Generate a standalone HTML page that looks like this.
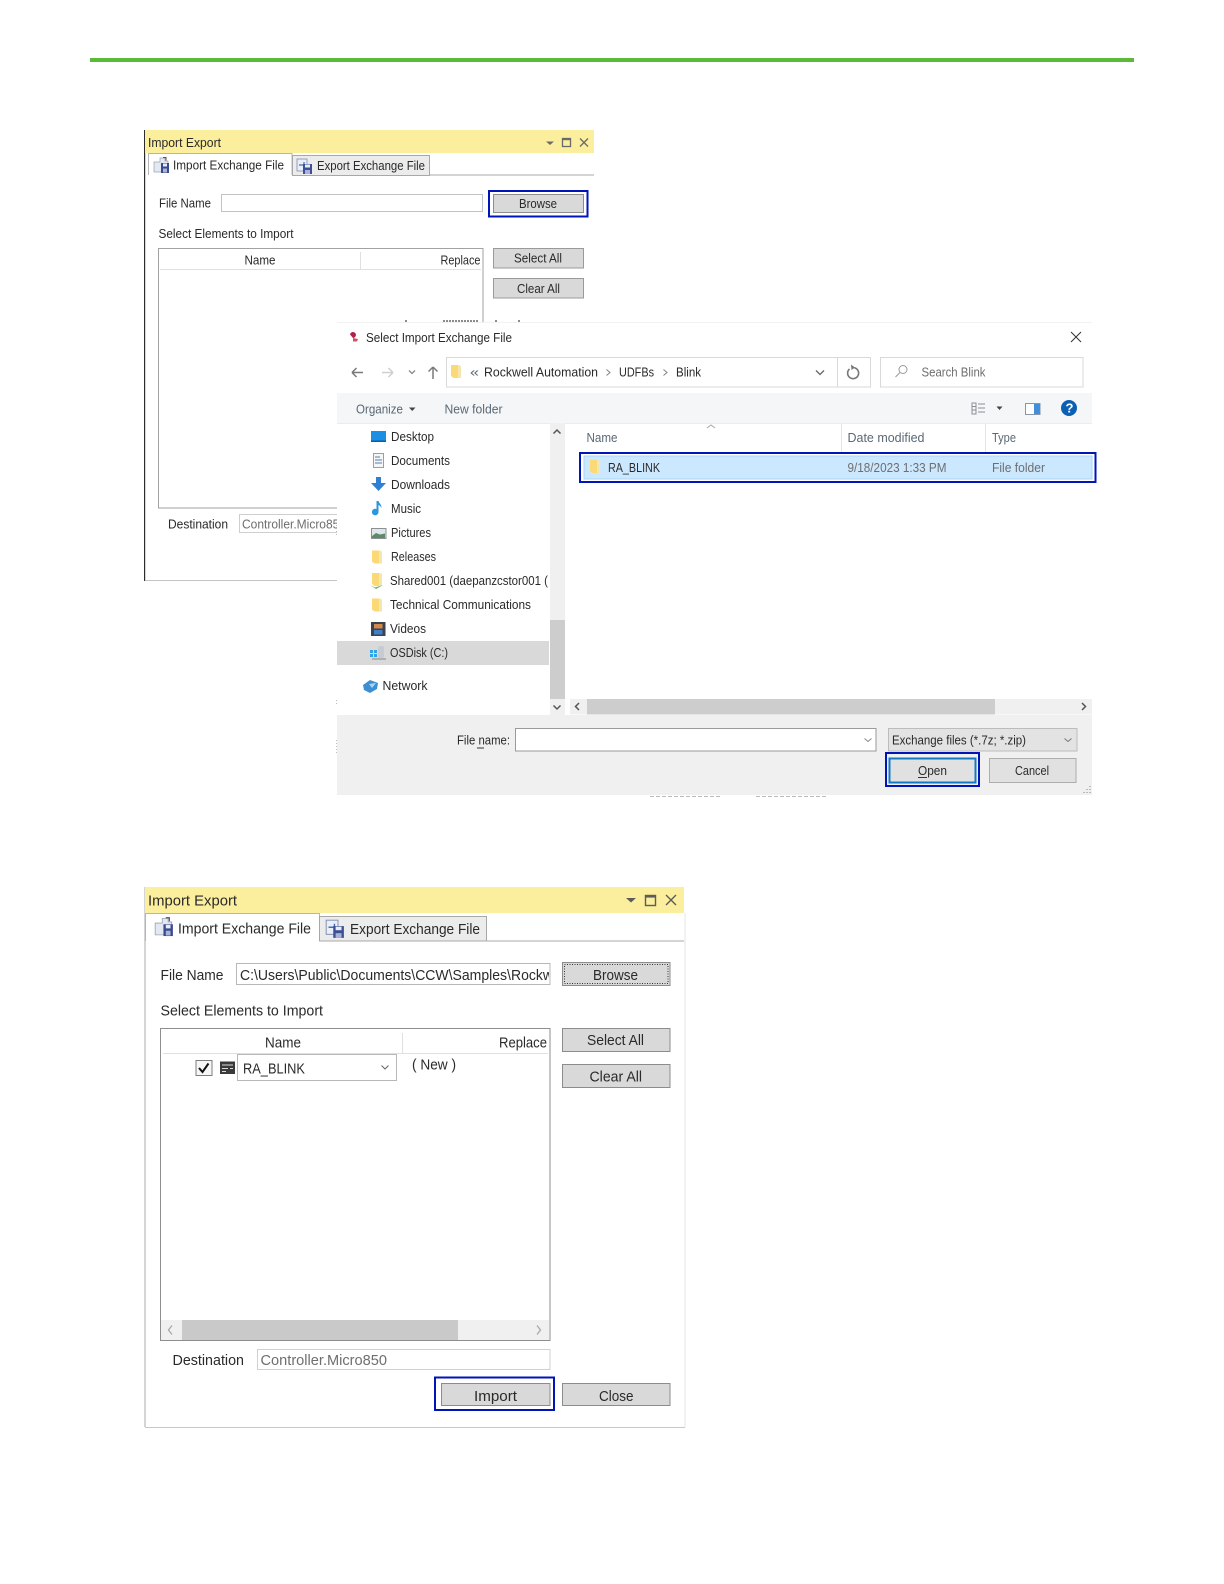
<!DOCTYPE html>
<html><head><meta charset="utf-8"><title>Import Export</title>
<style>
html,body{margin:0;padding:0;background:#fff}
svg{display:block}
text{font-family:"Liberation Sans",sans-serif;fill:#2a2a2a}
.a{font-size:12.5px}
.b{font-size:15px}
.g{fill:#6e6e6e}
.h{fill:#5a6876}
</style></head><body>
<svg xmlns="http://www.w3.org/2000/svg" width="1224" height="1584" viewBox="0 0 1224 1584">
<defs>
<clipPath id="c1"><rect x="238" y="962" width="311" height="24"/></clipPath>
<clipPath id="c2"><rect x="380" y="570" width="169" height="22"/></clipPath>
<clipPath id="c3"><rect x="240" y="514" width="97" height="20"/></clipPath>
<g id="fold"><path d="M0 1h7l3 1v12H2.500L0 12z" fill="#fbd976"/><path d="M7 1l3 1v12H7z" fill="#f5e6ae"/></g>
<g id="imp"><path d="M1 15V6h6V2h5v3h3v11H1z" fill="#e4e8f0" stroke="#9aa2b4" stroke-width=".7"/><rect x="8" y="7" width="8" height="10" fill="#3a4a8e"/><rect x="10" y="7.500" width="4" height="3" fill="#e8ecf5"/><rect x="10" y="12.500" width="4" height="4" fill="#aab4d6"/><path d="M10 1.500l3 0v3" fill="none" stroke="#555" stroke-width="1"/></g>
<g id="exp"><rect x="1" y="1" width="10" height="12" fill="#e9eef8" stroke="#7f8cab" stroke-width=".8"/><path d="M3 7h5V4" fill="none" stroke="#3e6fb5" stroke-width="1.200"/><rect x="7" y="6" width="9" height="10" fill="#3d4f98"/><rect x="9" y="6.500" width="5" height="3" fill="#e8ecf5"/><rect x="9" y="12" width="5" height="4" fill="#a9b3d6"/></g>
</defs>
<rect width="1224" height="1584" fill="#fff"/>
<rect x="90" y="58" width="1044" height="4" fill="#5bbb38"/>

<!-- Dialog 1 -->
<rect x="144" y="130" width="1.200" height="451" fill="#2d2d2d"/>
<rect x="145" y="580" width="192" height="1" fill="#c4c4c4"/>
<rect x="145" y="130" width="449" height="23" fill="#fbee9c"/>
<text class="a" x="148" y="146.800" textLength="73" lengthAdjust="spacingAndGlyphs">Import Export</text>
<path d="M546 141.500h8l-4 3.500z" fill="#6a6a6a"/>
<rect x="562.500" y="138.500" width="8" height="8" fill="none" stroke="#6a6a6a" stroke-width="1.300"/><rect x="562" y="138" width="9" height="2.200" fill="#6a6a6a"/>
<path d="M580 138.500l8 8M588 138.500l-8 8" stroke="#6a6a6a" stroke-width="1.300"/>
<path d="M429 175H594" stroke="#a8a8a8"/>
<path d="M148.500 175V153.500H292V175" fill="#fff" stroke="#b5b5b5"/>
<rect x="292.500" y="155.500" width="137" height="20" fill="#ececec" stroke="#a8a8a8"/>
<use href="#imp" x="153" y="156"/>
<use href="#exp" x="296" y="158"/>
<text class="a" x="173" y="169.500" textLength="111" lengthAdjust="spacingAndGlyphs">Import Exchange File</text>
<text class="a" x="317" y="170" textLength="108" lengthAdjust="spacingAndGlyphs">Export Exchange File</text>
<text class="a" x="159" y="207.500" textLength="52" lengthAdjust="spacingAndGlyphs">File Name</text>
<rect x="221.500" y="194.500" width="261" height="17" fill="#fff" stroke="#c2c2c2"/>
<rect x="493.500" y="194.500" width="90" height="18" fill="#d9d9d9" stroke="#8c8c8c"/>
<text class="a" x="519" y="208" textLength="38" lengthAdjust="spacingAndGlyphs">Browse</text>
<rect x="489" y="191" width="98.500" height="25.500" fill="none" stroke="#0015b8" stroke-width="2"/>
<text class="a" x="158.500" y="237.800" textLength="135" lengthAdjust="spacingAndGlyphs">Select Elements to Import</text>
<rect x="158.500" y="248.500" width="324.500" height="259.500" fill="#fff" stroke="#a2a2a2"/>
<path d="M160 269.500H481" stroke="#e0e0e0"/><path d="M360.500 252V269" stroke="#e0e0e0"/>
<text class="a" x="244.500" y="264.500" textLength="31" lengthAdjust="spacingAndGlyphs">Name</text>
<text class="a" x="440.500" y="264.500" textLength="40" lengthAdjust="spacingAndGlyphs">Replace</text>
<rect x="493.500" y="248.500" width="90" height="19.500" fill="#d9d9d9" stroke="#9a9a9a"/>
<text class="a" x="514" y="262.500" textLength="48" lengthAdjust="spacingAndGlyphs">Select All</text>
<rect x="493.500" y="278.500" width="90" height="19.500" fill="#d9d9d9" stroke="#9a9a9a"/>
<text class="a" x="517" y="293" textLength="43" lengthAdjust="spacingAndGlyphs">Clear All</text>
<text class="a" x="168" y="528.500" textLength="60" lengthAdjust="spacingAndGlyphs">Destination</text>
<rect x="239.500" y="514.500" width="110" height="18" fill="#fff" stroke="#cfcfcf"/>
<text class="a g" x="242" y="528.500" textLength="104" lengthAdjust="spacingAndGlyphs" clip-path="url(#c3)">Controller.Micro850</text>
<path d="M405 321h3M443 321h35M495 321h3M518 321h3" stroke="#666" stroke-width="1.500" stroke-dasharray="2 1"/>

<!-- Dialog 2 -->
<rect x="337" y="322" width="755" height="473" fill="#fff"/>
<rect x="337" y="322" width="755" height="1" fill="#f2f2f2"/>
<path d="M350 334.500a3 3 0 1 1 3 3.500" fill="#b3204a"/><path d="M353 338l5 1-1 2.500h-4z" fill="#c9555f"/>
<text class="a" x="366" y="341.800" textLength="146" lengthAdjust="spacingAndGlyphs">Select Import Exchange File</text>
<path d="M1071 332l10 10M1081 332l-10 10" stroke="#333" stroke-width="1"/>
<path d="M352 372.500h11M352 372.500l4.500-4.500M352 372.500l4.500 4.500" fill="none" stroke="#7a7a7a" stroke-width="1.500"/>
<path d="M382 372.500h11M393 372.500l-4.500-4.500M393 372.500l-4.500 4.500" fill="none" stroke="#cfcfcf" stroke-width="1.500"/>
<path d="M409 370.500l3 3 3-3" fill="none" stroke="#888" stroke-width="1.300"/>
<path d="M433 379v-12M433 367l-4.500 4.500M433 367l4.500 4.500" fill="none" stroke="#7a7a7a" stroke-width="1.500"/>
<rect x="446.500" y="357.500" width="424" height="29.500" fill="#fff" stroke="#d9d9d9"/>
<path d="M837.500 358V387" stroke="#d9d9d9"/>
<use href="#fold" x="451" y="364"/>
<text class="a h" x="470" y="376.500" textLength="9" lengthAdjust="spacingAndGlyphs">«</text>
<text class="a" x="484" y="376.500" textLength="114" lengthAdjust="spacingAndGlyphs">Rockwell Automation</text>
<path d="M606.500 369.500l3.500 3-3.500 3" fill="none" stroke="#888" stroke-width="1.100"/>
<text class="a" x="619" y="376.500" textLength="35" lengthAdjust="spacingAndGlyphs">UDFBs</text>
<path d="M663.500 369.500l3.500 3-3.500 3" fill="none" stroke="#888" stroke-width="1.100"/>
<text class="a" x="676" y="376.500" textLength="25" lengthAdjust="spacingAndGlyphs">Blink</text>
<path d="M816 370.500l4 4 4-4" fill="none" stroke="#666" stroke-width="1.300"/>
<path d="M849.500 369a5.500 5.500 0 1 0 5-1.200" fill="none" stroke="#777" stroke-width="1.600"/><path d="M851 364.500l4 3-3.500 2.500z" fill="#777"/>
<rect x="880.500" y="357.500" width="202.500" height="29.500" fill="#fff" stroke="#d9d9d9"/>
<circle cx="903" cy="369.500" r="4" fill="none" stroke="#9a9a9a"/><path d="M900 372.500l-4.500 4.500" stroke="#9a9a9a"/>
<text class="a g" x="921.500" y="376.500" textLength="64" lengthAdjust="spacingAndGlyphs">Search Blink</text>
<rect x="337" y="393" width="755" height="30" fill="#f5f6f7"/>
<rect x="337" y="423" width="755" height="1" fill="#ececec"/>
<text class="a h" x="356" y="413.500" textLength="47" lengthAdjust="spacingAndGlyphs">Organize</text>
<path d="M409 407.500h6.500l-3.250 3.500z" fill="#444"/>
<text class="a h" x="444.500" y="413.500" textLength="58" lengthAdjust="spacingAndGlyphs">New folder</text>
<path d="M972 403h4v11h-4zM972 406.500h4M972 410h4M978 404h7M978 408h7M978 412h7" fill="none" stroke="#8a8f96"/>
<path d="M996.500 406.500h6l-3 3.500z" fill="#444"/>
<rect x="1025.500" y="403.500" width="14.500" height="11" fill="#fff" stroke="#8a95a5"/><rect x="1034" y="404" width="6" height="10" fill="#3f8fdc"/>
<circle cx="1069" cy="408" r="8" fill="#0b60b3"/>
<text x="1065.500" y="412.500" font-size="13" font-weight="bold" style="fill:#fff">?</text>

<!-- nav pane -->
<rect x="337" y="641" width="212" height="24" fill="#d9d9d9"/>
<rect x="371" y="431" width="15" height="11" fill="#1a8fe3"/><rect x="371" y="440.500" width="15" height="1.500" fill="#0a5ea8"/>
<rect x="373.500" y="453.500" width="10" height="14" fill="#f4f6f8" stroke="#9a9fa6"/><path d="M375 457h5M375 460h7M375 463h7" stroke="#5c7fa8"/>
<path d="M376 477h5v6h5l-7.500 8-7.500-8h5z" fill="#2f7fd6"/>
<path d="M378.500 501v11a3.300 3.300 0 1 1-2-3V501z" fill="#2c97de"/><path d="M378.500 501c1 3 3 3 3 7-1-2-2-2.500-3-3z" fill="#2c97de"/>
<rect x="371.500" y="528.500" width="14.500" height="10" fill="#dfe7ea" stroke="#8a9096"/><path d="M372 536l4-3 4 1.500 5-1v4.500h-13z" fill="#5e8a6a"/>
<use href="#fold" x="372" y="549.500"/>
<use href="#fold" x="372" y="572"/><path d="M370 585l5 2.500 8-2.500-7 4z" fill="#66b45a"/>
<use href="#fold" x="372" y="597.500"/>
<rect x="371" y="622" width="14.500" height="14" fill="#3b4250"/><rect x="374" y="624" width="8.500" height="4.500" fill="#d18a4d"/><rect x="374" y="630" width="8.500" height="4.500" fill="#3f7fc8"/>
<path d="M370 650h3v3h-3zM374 650h3v3h-3zM370 654h3v3h-3zM374 654h3v3h-3z" fill="#2fa3e6"/><rect x="378" y="646" width="6" height="12" rx="2" fill="#c8ccd2"/><path d="M372 659h14" stroke="#888"/>
<path d="M363 685l7-5 8 3-1 6-7 4-6-3z" fill="#3c8fd2"/><path d="M369 684l7-1-4 5z" fill="#a8d6f2"/>
<text class="a" x="391" y="441" textLength="43" lengthAdjust="spacingAndGlyphs">Desktop</text>
<text class="a" x="391" y="465" textLength="59" lengthAdjust="spacingAndGlyphs">Documents</text>
<text class="a" x="391" y="489" textLength="59" lengthAdjust="spacingAndGlyphs">Downloads</text>
<text class="a" x="391" y="513" textLength="30" lengthAdjust="spacingAndGlyphs">Music</text>
<text class="a" x="391" y="537" textLength="40" lengthAdjust="spacingAndGlyphs">Pictures</text>
<text class="a" x="391" y="561" textLength="45" lengthAdjust="spacingAndGlyphs">Releases</text>
<text class="a" x="390" y="585" textLength="158" lengthAdjust="spacingAndGlyphs" clip-path="url(#c2)">Shared001 (daepanzcstor001 (</text>
<text class="a" x="390" y="609" textLength="141" lengthAdjust="spacingAndGlyphs">Technical Communications</text>
<text class="a" x="390" y="633" textLength="36" lengthAdjust="spacingAndGlyphs">Videos</text>
<text class="a" x="390" y="657" textLength="58" lengthAdjust="spacingAndGlyphs">OSDisk (C:)</text>
<text class="a" x="382.500" y="690" textLength="45" lengthAdjust="spacingAndGlyphs">Network</text>
<rect x="550" y="423" width="15" height="292" fill="#f0f0f0"/>
<rect x="550" y="620" width="15" height="79" fill="#cdcdcd"/>
<path d="M553.500 433.500l3.500-3.500 3.500 3.500" fill="none" stroke="#555" stroke-width="1.500"/>
<path d="M553.500 705.500l3.500 3.500 3.500-3.500" fill="none" stroke="#555" stroke-width="1.500"/>
<!-- columns -->
<text class="a h" x="586.500" y="441.800" textLength="31" lengthAdjust="spacingAndGlyphs">Name</text>
<path d="M707 428l4-3 4 3" fill="none" stroke="#a8a8a8"/>
<path d="M841.500 424V452M985.500 424V452" stroke="#e5e5e5"/>
<text class="a h" x="847.500" y="441.800" textLength="77" lengthAdjust="spacingAndGlyphs">Date modified</text>
<text class="a h" x="992" y="441.800" textLength="24" lengthAdjust="spacingAndGlyphs">Type</text>
<rect x="584" y="456" width="508" height="23" fill="#cce8ff" stroke="#a6d6fb"/>
<rect x="580" y="453" width="515.500" height="29" fill="none" stroke="#0015b8" stroke-width="2"/>
<use href="#fold" x="590" y="459"/>
<text class="a" x="608" y="472" textLength="52" lengthAdjust="spacingAndGlyphs">RA_BLINK</text>
<text class="a g" x="847.500" y="472" textLength="99" lengthAdjust="spacingAndGlyphs">9/18/2023 1:33 PM</text>
<text class="a g" x="992" y="472" textLength="53" lengthAdjust="spacingAndGlyphs">File folder</text>
<!-- hscroll -->
<rect x="570" y="699" width="522" height="15.500" fill="#f0f0f0"/>
<rect x="587" y="699" width="408" height="15.500" fill="#cdcdcd"/>
<path d="M579 703l-3.500 3.500 3.500 3.500" fill="none" stroke="#555" stroke-width="1.500"/>
<path d="M1082 703l3.500 3.500-3.500 3.500" fill="none" stroke="#555" stroke-width="1.500"/>
<!-- footer -->
<rect x="337" y="715" width="755" height="80" fill="#f0f0f0"/>
<text class="a" x="457" y="744.500" textLength="53" lengthAdjust="spacingAndGlyphs">File name:</text>
<path d="M477 748h7" stroke="#333"/>
<rect x="515.500" y="728.500" width="360.500" height="22.500" fill="#fff" stroke="#9a9a9a"/>
<path d="M864.500 738.500l3.500 3 3.500-3" fill="none" stroke="#888"/>
<rect x="888.500" y="728.500" width="188.500" height="22.500" fill="#e3e3e3" stroke="#bcbcbc"/>
<text class="a" x="892" y="744.500" textLength="134" lengthAdjust="spacingAndGlyphs">Exchange files (*.7z; *.zip)</text>
<path d="M1064.500 738.500l3.500 3 3.500-3" fill="none" stroke="#777"/>
<rect x="889.500" y="758.500" width="86" height="24" fill="#e1e1e1" stroke="#1179c4" stroke-width="2"/>
<rect x="886" y="753" width="93" height="33" fill="none" stroke="#0015b8" stroke-width="2"/>
<text class="a" x="918" y="775" textLength="29" lengthAdjust="spacingAndGlyphs">Open</text>
<path d="M918 777.500h9" stroke="#333"/>
<rect x="989.500" y="758.500" width="86.500" height="24" fill="#e1e1e1" stroke="#adadad"/>
<text class="a" x="1015" y="775" textLength="34" lengthAdjust="spacingAndGlyphs">Cancel</text>
<path d="M1090 786v1M1087 789v1M1090 789v1M1084 792v1M1087 792v1M1090 792v1" stroke="#a8a8a8" stroke-width="1.500"/>
<path d="M650 796.500h70M756 796.500h72" stroke="#bbb" stroke-dasharray="4 2"/>
<path d="M336.500 740v14M336.500 525v10M336.500 700v4" stroke="#bbb" stroke-dasharray="1 2"/>

<!-- Dialog 3 -->
<rect x="144.500" y="887" width="1" height="540" fill="#ababab"/>
<rect x="145" y="1427" width="540" height="1" fill="#c8c8c8"/>
<rect x="684.500" y="913" width="1" height="514" fill="#e4e4e4"/>
<rect x="145" y="887" width="539" height="26" fill="#fbee9c"/>
<text class="b" x="148" y="905.500" textLength="89" lengthAdjust="spacingAndGlyphs">Import Export</text>
<path d="M626 898h10l-5 4.500z" fill="#5c5c5c"/>
<rect x="645.500" y="895.500" width="10" height="10" fill="none" stroke="#5c5c5c" stroke-width="1.400"/><rect x="645" y="895" width="11" height="2.600" fill="#5c5c5c"/>
<path d="M666 895l10 10M676 895l-10 10" stroke="#5c5c5c" stroke-width="1.400"/>
<path d="M486 941H684" stroke="#a8a8a8"/>
<path d="M145.500 941V913.500H319.500V941" fill="#fff" stroke="#b5b5b5"/>
<rect x="319.500" y="916.500" width="167" height="24.500" fill="#ececec" stroke="#a8a8a8"/>
<g transform="translate(154 916) scale(1.180)"><use href="#imp"/></g>
<g transform="translate(325 919) scale(1.180)"><use href="#exp"/></g>
<text class="b" x="178" y="933.300" textLength="133" lengthAdjust="spacingAndGlyphs">Import Exchange File</text>
<text class="b" x="350" y="934" textLength="130" lengthAdjust="spacingAndGlyphs">Export Exchange File</text>
<text class="b" x="160.500" y="980" textLength="63" lengthAdjust="spacingAndGlyphs">File Name</text>
<rect x="236.500" y="963.500" width="313.500" height="21" fill="#fff" stroke="#b8b8b8"/>
<text class="b" x="240" y="980" textLength="313" lengthAdjust="spacingAndGlyphs" clip-path="url(#c1)">C:\Users\Public\Documents\CCW\Samples\Rockw</text>
<rect x="562.500" y="962.500" width="107.500" height="23" fill="#d9d9d9" stroke="#8c8c8c"/>
<rect x="564.500" y="964.500" width="103.500" height="19" fill="none" stroke="#333" stroke-dasharray="1 1.500"/>
<text class="b" x="593" y="980" textLength="45" lengthAdjust="spacingAndGlyphs">Browse</text>
<text class="b" x="160.500" y="1015.500" textLength="162.500" lengthAdjust="spacingAndGlyphs">Select Elements to Import</text>
<rect x="160.500" y="1028.500" width="389.500" height="312" fill="#fff" stroke="#8e8e8e"/>
<path d="M163 1053.500H548" stroke="#e0e0e0"/><path d="M402.500 1033V1053" stroke="#e0e0e0"/>
<text class="b" x="265" y="1047.300" textLength="36" lengthAdjust="spacingAndGlyphs">Name</text>
<text class="b" x="499" y="1047.300" textLength="48" lengthAdjust="spacingAndGlyphs">Replace</text>
<rect x="562.500" y="1028.500" width="107.500" height="23" fill="#d9d9d9" stroke="#8c8c8c"/>
<text class="b" x="587" y="1045" textLength="57" lengthAdjust="spacingAndGlyphs">Select All</text>
<rect x="562.500" y="1064.500" width="107.500" height="23" fill="#d9d9d9" stroke="#8c8c8c"/>
<text class="b" x="589.500" y="1081.700" textLength="52.500" lengthAdjust="spacingAndGlyphs">Clear All</text>
<rect x="196" y="1060.500" width="16" height="15" fill="#f6f6f6" stroke="#7d7d7d"/>
<path d="M199 1068l3.500 4 6-8.500" fill="none" stroke="#111" stroke-width="2"/>
<rect x="220" y="1061.500" width="15" height="12.500" fill="#3a3a3a"/><path d="M222 1065h11M222 1068.500h6M230 1068.500h3M222 1071.500h4" stroke="#dcdcdc"/>
<rect x="237.500" y="1054.500" width="159" height="26" fill="#fff" stroke="#b8b8b8"/>
<text class="b" x="243" y="1073.500" textLength="62" lengthAdjust="spacingAndGlyphs">RA_BLINK</text>
<path d="M381.500 1065.500l3.500 3.500 3.500-3.500" fill="none" stroke="#666"/>
<text class="b" x="412" y="1069.500" textLength="44" lengthAdjust="spacingAndGlyphs">( New )</text>
<rect x="161" y="1320" width="388" height="20" fill="#f0f0f0"/>
<rect x="182" y="1320" width="276" height="20" fill="#c9c9c9"/>
<path d="M172 1325.500l-3.500 4.500 3.500 4.500" fill="none" stroke="#a8a8a8" stroke-width="1.300"/>
<path d="M537 1325.500l3.500 4.500-3.500 4.500" fill="none" stroke="#a8a8a8" stroke-width="1.300"/>
<text class="b" x="172.500" y="1365" textLength="71.500" lengthAdjust="spacingAndGlyphs">Destination</text>
<rect x="257.500" y="1349.500" width="292.500" height="20" fill="#fff" stroke="#d0d0d0"/>
<text class="b g" x="260.500" y="1365" textLength="126.500" lengthAdjust="spacingAndGlyphs">Controller.Micro850</text>
<rect x="441.500" y="1383.500" width="108.500" height="22" fill="#d9d9d9" stroke="#8c8c8c"/>
<rect x="435" y="1377.500" width="119" height="32.500" fill="none" stroke="#0015b8" stroke-width="2"/>
<text class="b" x="474" y="1401" textLength="43" lengthAdjust="spacingAndGlyphs">Import</text>
<rect x="562.500" y="1383.500" width="107.500" height="22" fill="#d9d9d9" stroke="#8c8c8c"/>
<text class="b" x="599" y="1401" textLength="34.500" lengthAdjust="spacingAndGlyphs">Close</text>
</svg>
</body></html>
